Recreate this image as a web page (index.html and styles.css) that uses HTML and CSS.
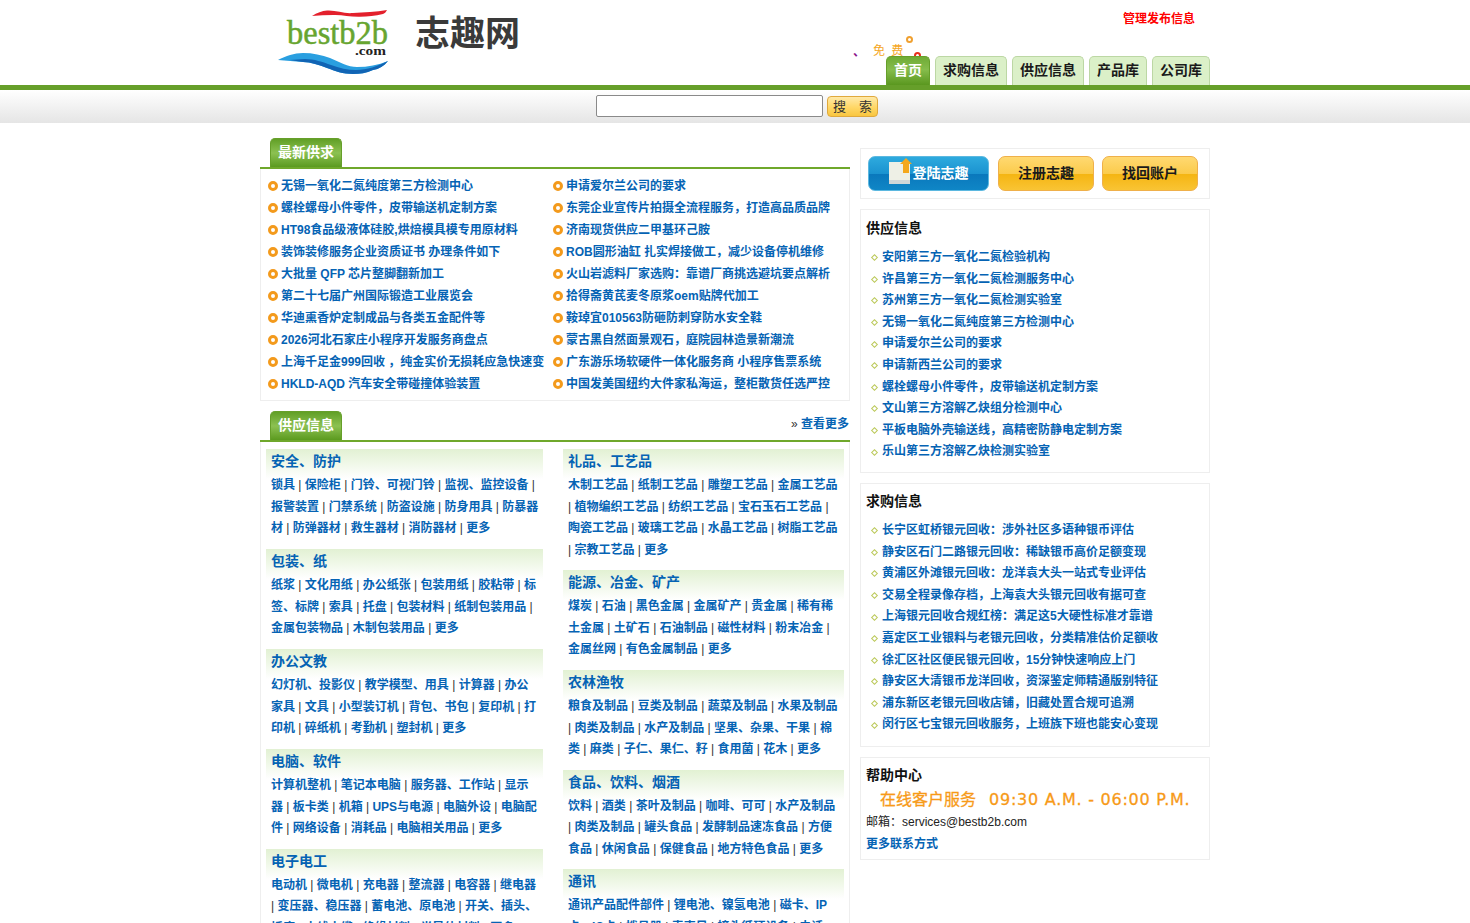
FILE: index.html
```html
<!DOCTYPE html>
<html lang="zh-CN">
<head>
<meta charset="utf-8">
<title>志趣网</title>
<link rel="stylesheet" href="styles.css">
</head>
<body>
<header class="top">
  <div class="wrap top-inner">
    <a class="logo" href="#">
      <svg width="112" height="68" viewBox="0 0 112 68">
        <path d="M34 8C39 5 44 3 49 2.600C58 2 66 6 75 5C86 4.500 98 4 109 2C108 4 107 5 105 6C97 8 90 8.700 82 8.700C72 9 64 6.500 55 7C48 7 41 7.500 34 8Z" fill="#e3202c"/>
        <text class="logo-name" x="9" y="36" textLength="101" lengthAdjust="spacingAndGlyphs">bestb2b</text>
        <text class="logo-com" x="77" y="47" textLength="31" lengthAdjust="spacingAndGlyphs">.com</text>
        <path d="M0 52C8 48 16 45 25 45C35 45 44 47 52 50C61 54 70 59 79 59C90 59 100 57 110 53C106 58 101 61 95 62C88 65 82 66 75 66C65 66 57 63 49 60C41 57 33 54 25 54C16 53 8 53 0 52Z" fill="#2a9fe0"/>
        <path d="M12 52C17 52 21 51 27 51C36 51 45 54 53 57C61 60 70 62 78 62C89 62 100 58 110 53C106 58 101 61 95 62C88 65 82 66 75 66C65 66 57 63 49 60C41 57 33 54 25 54C20 53 16 53 12 52Z" fill="#1164b4"/>
      </svg>
    </a>
    <div class="site-name">志趣网</div>
    <div class="top-right">
      <a class="manage" href="#">管理发布信息</a>
      <nav class="nav">
        <a class="nav-tab active" href="#">首页</a>
        <a class="nav-tab" href="#">求购信息</a>
        <a class="nav-tab" href="#">供应信息</a>
        <a class="nav-tab" href="#">产品库</a>
        <a class="nav-tab" href="#">公司库</a>
      </nav>
      <span class="deco deco-comma">、</span>
      <span class="deco deco-free">免 费</span>
      <span class="deco deco-ring-o"></span>
      <span class="deco deco-ring-r"></span>
    </div>
  </div>
</header>
<div class="search-bar">
  <input class="search-input" type="text">
  <button class="search-btn" type="button">搜&emsp;索</button>
</div>

<main class="wrap main">
  <div class="left">
    <section class="sec">
      <div class="sec-head"><h2 class="tab">最新供求</h2></div>
      <ul class="news">
        <li><a href="#">无锡一氧化二氮纯度第三方检测中心</a></li>
        <li><a href="#">申请爱尔兰公司的要求</a></li>
        <li><a href="#">螺栓螺母小件零件，皮带输送机定制方案</a></li>
        <li><a href="#">东莞企业宣传片拍摄全流程服务，打造高品质品牌</a></li>
        <li><a href="#">HT98食品级液体硅胶,烘焙模具模专用原材料</a></li>
        <li><a href="#">济南现货供应二甲基环己胺</a></li>
        <li><a href="#">装饰装修服务企业资质证书 办理条件如下</a></li>
        <li><a href="#">ROB圆形油缸 扎实焊接做工，减少设备停机维修</a></li>
        <li><a href="#">大批量 QFP 芯片整脚翻新加工</a></li>
        <li><a href="#">火山岩滤料厂家选购：靠谱厂商挑选避坑要点解析</a></li>
        <li><a href="#">第二十七届广州国际锻造工业展览会</a></li>
        <li><a href="#">拾得斋黄芪麦冬原浆oem贴牌代加工</a></li>
        <li><a href="#">华迪熏香炉定制成品与各类五金配件等</a></li>
        <li><a href="#">鞍琸宜010563防砸防刺穿防水安全鞋</a></li>
        <li><a href="#">2026河北石家庄小程序开发服务商盘点</a></li>
        <li><a href="#">蒙古黑自然面景观石，庭院园林造景新潮流</a></li>
        <li><a href="#">上海千足金999回收 ，纯金实价无损耗应急快速变</a></li>
        <li><a href="#">广东游乐场软硬件一体化服务商 小程序售票系统</a></li>
        <li><a href="#">HKLD-AQD 汽车安全带碰撞体验装置</a></li>
        <li><a href="#">中国发美国纽约大件家私海运，整柜散货任选严控</a></li>
      </ul>
    </section>

    <section class="sec sec-cats">
      <div class="sec-head">
        <h2 class="tab">供应信息</h2>
        <span class="more">» <a href="#">查看更多</a></span>
      </div>
      <div class="cats">
        <div class="cat-col cat-col-l">
          <div class="cat">
            <h3>安全、防护</h3>
            <p><a href="#">锁具</a> | <a href="#">保险柜</a> | <a href="#">门铃、可视门铃</a> | <a href="#">监视、监控设备</a> | <a href="#">报警装置</a> | <a href="#">门禁系统</a> | <a href="#">防盗设施</a> | <a href="#">防身用具</a> | <a href="#">防暴器材</a> | <a href="#">防弹器材</a> | <a href="#">救生器材</a> | <a href="#">消防器材</a> | <a href="#">更多</a></p>
          </div>
          <div class="cat">
            <h3>包装、纸</h3>
            <p><a href="#">纸浆</a> | <a href="#">文化用纸</a> | <a href="#">办公纸张</a> | <a href="#">包装用纸</a> | <a href="#">胶粘带</a> | <a href="#">标签、标牌</a> | <a href="#">索具</a> | <a href="#">托盘</a> | <a href="#">包装材料</a> | <a href="#">纸制包装用品</a> | <a href="#">金属包装物品</a> | <a href="#">木制包装用品</a> | <a href="#">更多</a></p>
          </div>
          <div class="cat">
            <h3>办公文教</h3>
            <p><a href="#">幻灯机、投影仪</a> | <a href="#">教学模型、用具</a> | <a href="#">计算器</a> | <a href="#">办公家具</a> | <a href="#">文具</a> | <a href="#">小型装订机</a> | <a href="#">背包、书包</a> | <a href="#">复印机</a> | <a href="#">打印机</a> | <a href="#">碎纸机</a> | <a href="#">考勤机</a> | <a href="#">塑封机</a> | <a href="#">更多</a></p>
          </div>
          <div class="cat">
            <h3>电脑、软件</h3>
            <p><a href="#">计算机整机</a> | <a href="#">笔记本电脑</a> | <a href="#">服务器、工作站</a> | <a href="#">显示器</a> | <a href="#">板卡类</a> | <a href="#">机箱</a> | <a href="#">UPS与电源</a> | <a href="#">电脑外设</a> | <a href="#">电脑配件</a> | <a href="#">网络设备</a> | <a href="#">消耗品</a> | <a href="#">电脑相关用品</a> | <a href="#">更多</a></p>
          </div>
          <div class="cat">
            <h3>电子电工</h3>
            <p><a href="#">电动机</a> | <a href="#">微电机</a> | <a href="#">充电器</a> | <a href="#">整流器</a> | <a href="#">电容器</a> | <a href="#">继电器</a> | <a href="#">变压器、稳压器</a> | <a href="#">蓄电池、原电池</a> | <a href="#">开关、插头、插座</a> | <a href="#">电线电缆</a> | <a href="#">绝缘材料</a> | <a href="#">半导体材料</a> | <a href="#">更多</a></p>
          </div>
        </div>
        <div class="cat-col cat-col-r">
          <div class="cat">
            <h3>礼品、工艺品</h3>
            <p><a href="#">木制工艺品</a> | <a href="#">纸制工艺品</a> | <a href="#">雕塑工艺品</a> | <a href="#">金属工艺品</a> | <a href="#">植物编织工艺品</a> | <a href="#">纺织工艺品</a> | <a href="#">宝石玉石工艺品</a> | <a href="#">陶瓷工艺品</a> | <a href="#">玻璃工艺品</a> | <a href="#">水晶工艺品</a> | <a href="#">树脂工艺品</a> | <a href="#">宗教工艺品</a> | <a href="#">更多</a></p>
          </div>
          <div class="cat">
            <h3>能源、冶金、矿产</h3>
            <p><a href="#">煤炭</a> | <a href="#">石油</a> | <a href="#">黑色金属</a> | <a href="#">金属矿产</a> | <a href="#">贵金属</a> | <a href="#">稀有稀土金属</a> | <a href="#">土矿石</a> | <a href="#">石油制品</a> | <a href="#">磁性材料</a> | <a href="#">粉末冶金</a> | <a href="#">金属丝网</a> | <a href="#">有色金属制品</a> | <a href="#">更多</a></p>
          </div>
          <div class="cat">
            <h3>农林渔牧</h3>
            <p><a href="#">粮食及制品</a> | <a href="#">豆类及制品</a> | <a href="#">蔬菜及制品</a> | <a href="#">水果及制品</a> | <a href="#">肉类及制品</a> | <a href="#">水产及制品</a> | <a href="#">坚果、杂果、干果</a> | <a href="#">棉类</a> | <a href="#">麻类</a> | <a href="#">子仁、果仁、籽</a> | <a href="#">食用菌</a> | <a href="#">花木</a> | <a href="#">更多</a></p>
          </div>
          <div class="cat">
            <h3>食品、饮料、烟酒</h3>
            <p><a href="#">饮料</a> | <a href="#">酒类</a> | <a href="#">茶叶及制品</a> | <a href="#">咖啡、可可</a> | <a href="#">水产及制品</a> | <a href="#">肉类及制品</a> | <a href="#">罐头食品</a> | <a href="#">发酵制品速冻食品</a> | <a href="#">方便食品</a> | <a href="#">休闲食品</a> | <a href="#">保健食品</a> | <a href="#">地方特色食品</a> | <a href="#">更多</a></p>
          </div>
          <div class="cat">
            <h3>通讯</h3>
            <p><a href="#">通讯产品配件部件</a> | <a href="#">锂电池、镍氢电池</a> | <a href="#">磁卡、IP卡、IC卡</a> | <a href="#">拨号器</a> | <a href="#">麦克风</a> | <a href="#">接头循环设备</a> | <a href="#">电话</a></p>
          </div>
        </div>
      </div>
    </section>
  </div>

  <aside class="right">
    <div class="box box-btns">
      <a class="btn btn-blue" href="#">
        <svg class="btn-icon" width="24" height="27" viewBox="0 0 24 27">
          <path d="M0 4H21V26H0Z" fill="#eef0e6"/>
          <path d="M0 22H21V26H0Z" fill="#cfd6d8"/>
          <path d="M14 15V6H11L17 0L23 6H20V15Z" fill="#f4a81c"/>
        </svg>
        <span>登陆志趣</span>
      </a>
      <a class="btn btn-yellow" href="#">注册志趣</a>
      <a class="btn btn-yellow" href="#">找回账户</a>
    </div>

    <div class="box side side-supply">
      <h4>供应信息</h4>
      <ul class="side-list">
        <li><a href="#">安阳第三方一氧化二氮检验机构</a></li>
        <li><a href="#">许昌第三方一氧化二氮检测服务中心</a></li>
        <li><a href="#">苏州第三方一氧化二氮检测实验室</a></li>
        <li><a href="#">无锡一氧化二氮纯度第三方检测中心</a></li>
        <li><a href="#">申请爱尔兰公司的要求</a></li>
        <li><a href="#">申请新西兰公司的要求</a></li>
        <li><a href="#">螺栓螺母小件零件，皮带输送机定制方案</a></li>
        <li><a href="#">文山第三方溶解乙炔组分检测中心</a></li>
        <li><a href="#">平板电脑外壳输送线，高精密防静电定制方案</a></li>
        <li><a href="#">乐山第三方溶解乙炔检测实验室</a></li>
      </ul>
    </div>

    <div class="box side">
      <h4>求购信息</h4>
      <ul class="side-list">
        <li><a href="#">长宁区虹桥银元回收：涉外社区多语种银币评估</a></li>
        <li><a href="#">静安区石门二路银元回收：稀缺银币高价足额变现</a></li>
        <li><a href="#">黄浦区外滩银元回收：龙洋袁大头一站式专业评估</a></li>
        <li><a href="#">交易全程录像存档，上海袁大头银元回收有据可查</a></li>
        <li><a href="#">上海银元回收合规红榜：满足这5大硬性标准才靠谱</a></li>
        <li><a href="#">嘉定区工业银料与老银元回收，分类精准估价足额收</a></li>
        <li><a href="#">徐汇区社区便民银元回收，15分钟快速响应上门</a></li>
        <li><a href="#">静安区大清银币龙洋回收，资深鉴定师精通版别特征</a></li>
        <li><a href="#">浦东新区老银元回收店铺，旧藏处置合规可追溯</a></li>
        <li><a href="#">闵行区七宝银元回收服务，上班族下班也能安心变现</a></li>
      </ul>
    </div>

    <div class="box side side-help">
      <h4>帮助中心</h4>
      <div class="hours"><span>在线客户服务</span><span class="hours-time">09:30 A.M. - 06:00 P.M.</span></div>
      <p class="mail">邮箱：services@bestb2b.com</p>
      <p class="contact"><a href="#">更多联系方式</a></p>
    </div>
  </aside>
</main>
</body>
</html>
```

FILE: styles.css
```css
*, *::before, *::after { box-sizing: border-box; }
html, body { margin: 0; padding: 0; }
body {
  height: 923px;
  overflow: hidden;
  background: #fff;
  color: #222;
  font: 12px/21.6px "Liberation Sans", "Noto Sans CJK KR", sans-serif;
}
a { color: #0563b4; text-decoration: none; font-weight: 700; }
ul { list-style: none; margin: 0; padding: 0; }
h2, h3, h4, p { margin: 0; }

.wrap { width: 950px; margin: 0 auto; }

/* header */
.top { height: 90px; border-bottom: 5px solid #669f2a; }
.top-inner { display: flex; height: 85px; }
.logo { display: block; margin: 8px 0 0 18px; width: 112px; height: 68px; }
.logo-name { font: 400 33px "Liberation Serif", serif; fill: #67a530; stroke: #67a530; stroke-width: .5px; }
.logo-com { font: 700 13px "Liberation Serif", serif; fill: #222; }
.site-name {
  margin: 13px 0 0 25px;
  font-size: 35px;
  line-height: 42px;
  font-weight: 700;
  color: #3a3a3a;
}
.top-right { position: relative; flex: 1; display: flex; flex-direction: column; align-items: flex-end; }
.manage { color: #f00; margin: 8px 15px 0 0; line-height: 22px; }
.nav { position: relative; z-index: 1; display: flex; gap: 5px; margin-top: auto; }
.nav-tab {
  height: 29px;
  padding: 0 7px;
  line-height: 27px;
  font-size: 14px;
  color: #1a1a1a;
  background: #dbf0c8;
  border: 1px solid #bcd7a4;
  border-bottom: 0;
  border-radius: 5px 5px 0 0;
}
.nav-tab.active {
  color: #fff;
  background: linear-gradient(#6fab35, #86bd4c 45%, #5a971f);
  border-color: #669f2a;
}
.deco { position: absolute; }
.deco-comma { left: 333px; top: 44px; font-size: 12px; line-height: 16px; color: #8a0f8a; font-weight: 700; }
.deco-free { left: 353px; top: 43px; font-size: 12px; line-height: 16px; color: #f5a623; white-space: pre; word-spacing: 3px; }
.deco-ring-o, .deco-ring-r { width: 7px; height: 7px; border-radius: 50%; border: 2px solid #f0a030; background: #fff; }
.deco-ring-o { left: 386px; top: 36px; }
.deco-ring-r { left: 394px; top: 52px; border-color: #e8301c; }

/* search */
.search-bar {
  height: 33px;
  display: flex;
  justify-content: center;
  gap: 4px;
  padding: 5px 0 0 4px;
  background: linear-gradient(#fff, #e5e5e5);
}
.search-input {
  width: 227px;
  height: 22px;
  margin: 0;
  padding: 0 3px;
  background: #fff;
  border: 1px solid #8a8a8a;
  border-radius: 2px;
}
.search-btn {
  width: 51px;
  height: 21px;
  margin: 1px 0 0;
  padding: 0;
  font: 13px/19px "Liberation Sans", "Noto Sans CJK KR", sans-serif;
  color: #333;
  background: linear-gradient(#ffe9a8, #ffd766 55%, #f9c640);
  border: 1px solid #e0a93c;
  border-radius: 4px;
}

/* layout */
.main { display: flex; justify-content: space-between; align-items: flex-start; padding-top: 15px; }
.left { width: 590px; }
.right { width: 350px; padding-top: 10px; display: flex; flex-direction: column; gap: 10px; }

/* left sections */
.sec-cats { margin-top: 10px; }
.sec-head {
  display: flex;
  justify-content: space-between;
  align-items: flex-start;
  height: 31px;
  padding-left: 10px;
  border-bottom: 2px solid #6fa82b;
}
.tab {
  width: 72px;
  height: 29px;
  text-align: center;
  font-size: 14px;
  line-height: 27px;
  color: #fff;
  background: linear-gradient(#619f26, #8cc152 50%, #5b9a1f);
  border: 1px solid #669f2a;
  border-bottom: 0;
  border-radius: 5px 5px 0 0;
}
.more { line-height: 27px; padding-right: 1px; color: #333; }

.news {
  display: grid;
  grid-template-columns: 285px 1fr;
  grid-auto-rows: 22px;
  padding: 6px 0 5px 7px;
  border: solid #eee;
  border-width: 0 1px 1px;
}
.news li { display: flex; align-items: center; gap: 3px; white-space: nowrap; line-height: 22px; }
.news li::before {
  content: "";
  flex: none;
  width: 10px;
  height: 10px;
  border: 3px solid #f39a1c;
  border-radius: 50%;
  background: #fff;
}

.cats { display: flex; gap: 20px; padding: 7px 5px 0; border: solid #eee; border-width: 0 1px; }
.cat-col-l { width: 277px; }
.cat-col-r { width: 281px; }
.cat-col-l .cat { padding-right: 3.5px; }
.cat {
  padding: 0 5px;
  margin-bottom: 9.2px;
  background: linear-gradient(#e2f1d3, #fff) no-repeat 0 0 / 100% 30px;
}
.cat-col-r .cat { margin-bottom: 8.9px; }
.cat h3 { font-size: 14px; line-height: 24px; font-weight: 700; color: #0563b4; }
.cat p { padding-top: 2px; color: #333; }

/* right */
.box { border: 1px solid #eee; background: #fff; }
.box-btns { display: flex; gap: 9px; height: 51px; padding: 7px 0 0 7px; }
.btn {
  display: flex;
  align-items: center;
  justify-content: center;
  height: 35px;
  font-size: 14px;
  border-radius: 7px;
}
.btn-blue {
  width: 121px;
  color: #fff;
  background: linear-gradient(#2eaade, #1b93d0 50%, #0a78bc 52%, #0f86c6);
  border: 1px solid #5cb8e0;
}
.btn-icon { flex: none; margin-top: -4px; }
.btn-yellow {
  width: 96px;
  margin-right: -1px;
  color: #1a1a1a;
  background: linear-gradient(#ffd971, #fbcb4c 50%, #f5b512 52%, #f9c434);
  border: 1px solid #efb04a;
}
.side { padding: 4px 5px 10px; }
.side-supply { padding: 5px 5px 9px; }
.side h4 { font-size: 14px; line-height: 26px; font-weight: 700; color: #111; margin-bottom: 6px; }
.side-list li { display: flex; align-items: center; gap: 5px; padding-left: 6px; white-space: nowrap; }
.side-list li::before {
  content: "";
  flex: none;
  width: 5px;
  height: 5px;
  border: 1px solid #bcc95a;
  transform: rotate(45deg);
}
.side-help { padding-bottom: 3px; }
.side-help h4 { margin-bottom: 0; }
.hours { display: flex; gap: 13px; padding-left: 14px; font-size: 16px; line-height: 23px; color: #f79a18; white-space: nowrap; -webkit-text-stroke: .3px #f79a18; }
.hours-time { font-family: "DejaVu Sans", sans-serif; font-size: 16px; letter-spacing: .75px; }
.mail { line-height: 22px; color: #222; }
.contact { line-height: 23px; }
```
